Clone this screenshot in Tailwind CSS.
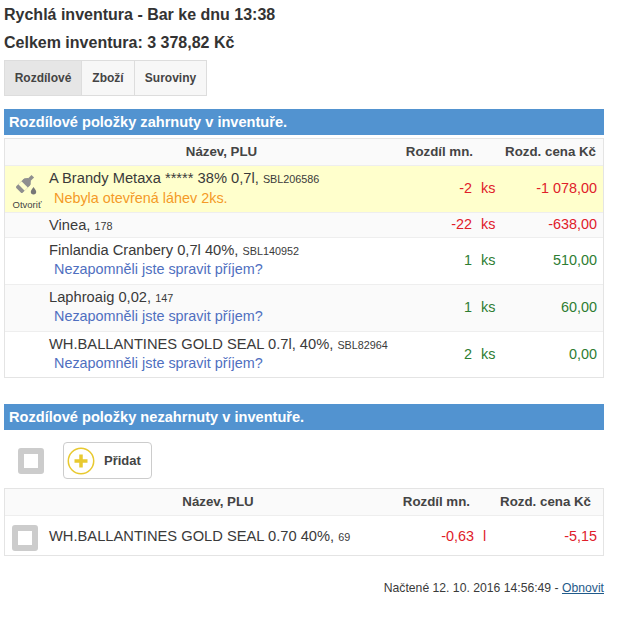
<!DOCTYPE html>
<html lang="cs">
<head>
  <meta charset="UTF-8" />
  <title>Rychlá inventura</title>
  <script src="https://cdn.jsdelivr.net/npm/@tailwindcss/browser@4"></script>
</head>
<body class="bg-white text-[#3a3a3a] font-['Liberation_Sans',Arial,sans-serif] text-[14.4px]">
  <div class="w-[600px] ml-[4px]">
    <!-- Nadpis -->
    <h3 class="text-[16px] font-bold leading-[20px] pt-[5px] text-[#333]">Rychlá inventura - Bar ke dnu 13:38</h3>
    <h3 class="text-[16px] font-bold leading-[20px] mt-[8px] text-[#333]">Celkem inventura: 3 378,82 Kč</h3>

    <!-- Záložky -->
    <div class="flex mt-[7px] text-[12px] font-bold text-[#444]">
      <div class="h-[36px] w-[78px] flex items-center justify-center bg-[#e6e6e6] border border-[#ddd]">Rozdílové</div>
      <div class="h-[36px] w-[53px] flex items-center justify-center bg-[#f7f7f7] border border-[#ddd] border-l-0">Zboží</div>
      <div class="h-[36px] w-[72px] flex items-center justify-center bg-[#f7f7f7] border border-[#ddd] border-l-0">Suroviny</div>
    </div>

    <!-- Zahrnuté položky -->
    <div class="mt-[13px] h-[26px] leading-[26px] bg-[#5293d0] text-white font-bold text-[14.6px] pl-[5px]">Rozdílové položky zahrnuty v inventuře.</div>
    <div class="mt-[3px] border border-[#e4e4e4]">
      <div class="flex h-[26px] items-center bg-[#fafafa] text-[13.3px] font-bold text-[#444]">
        <div class="w-[394px] pl-[39px] text-center">Název, PLU</div>
        <div class="w-[74px] text-right">Rozdíl mn.</div>
        <div class="w-[123px] text-right">Rozd. cena Kč</div>
      </div>

      <div class="flex h-[47px] bg-[#ffffcc] border-t border-[#eee]">
        <div class="w-[44px] flex flex-col items-center pt-[8px] shrink-0 text-[9.5px] leading-[10px] text-[#444]">
          <svg width="22" height="22" viewBox="0 0 22 22">
            <g transform="translate(9 10) rotate(45)" fill="#8f8f8f">
              <rect x="-4.500" y="-4" width="9" height="13" rx="1.500"/>
              <path d="M-4.500-2Q-4.500-4-1.800-6.500H1.800Q4.500-4 4.500-2z"/>
              <rect x="-1.800" y="-11" width="3.600" height="5"/>
              <rect x="-4.500" y="0.500" width="9" height="4.500" fill="#ffffcc"/>
            </g>
            <path d="M17.500 13c1.500 2.200 2.700 3.300 2.700 4.700a2.700 2.700 0 0 1-5.400 0c0-1.400 1.200-2.500 2.700-4.700z" fill="#777"/>
          </svg>
          <span class="mt-[4px]">Otvoriť</span>
        </div>
        <div class="w-[350px] pt-[3px] leading-[19px]">
          <div class="text-[14.7px]">A Brandy Metaxa ***** 38% 0,7l, <span class="text-[10.8px]">SBL206586</span></div>
          <div class="pl-[5px] text-[#f49a27]">Nebyla otevřená láhev 2ks.</div>
        </div>
        <div class="w-[73px] self-center text-right text-[#e0202a]">-2</div>
        <div class="w-[24px] self-center pl-[9px] text-[#e0202a]">ks</div>
        <div class="w-[107px] pr-[6px] self-center text-right text-[#e0202a]">-1 078,00</div>
      </div>

      <div class="flex h-[25px] items-center bg-[#fafafa] border-t border-[#eee]">
        <div class="w-[394px] pl-[44px] text-[14.7px]">Vinea, <span class="text-[10.8px]">178</span></div>
        <div class="w-[73px] text-right text-[#e0202a]">-22</div>
        <div class="w-[24px] pl-[9px] text-[#e0202a]">ks</div>
        <div class="w-[107px] pr-[6px] text-right text-[#e0202a]">-638,00</div>
      </div>

      <div class="flex h-[47px] items-center border-t border-[#eee]">
        <div class="w-[394px] pl-[44px] leading-[18px] mb-[3px]">
          <div class="text-[14.7px]">Finlandia Cranbery 0,7l 40%, <span class="text-[10.8px]">SBL140952</span></div>
          <div class="pl-[5px] text-[#4f6fc0]">Nezapomněli jste spravit příjem?</div>
        </div>
        <div class="w-[73px] text-right text-[#2e7d32]">1</div>
        <div class="w-[24px] pl-[9px] text-[#2e7d32]">ks</div>
        <div class="w-[107px] pr-[6px] text-right text-[#2e7d32]">510,00</div>
      </div>

      <div class="flex h-[47px] items-center bg-[#fafafa] border-t border-[#eee]">
        <div class="w-[394px] pl-[44px] leading-[18px] mb-[3px]">
          <div class="text-[14.7px]">Laphroaig 0,02, <span class="text-[10.8px]">147</span></div>
          <div class="pl-[5px] text-[#4f6fc0]">Nezapomněli jste spravit příjem?</div>
        </div>
        <div class="w-[73px] text-right text-[#2e7d32]">1</div>
        <div class="w-[24px] pl-[9px] text-[#2e7d32]">ks</div>
        <div class="w-[107px] pr-[6px] text-right text-[#2e7d32]">60,00</div>
      </div>

      <div class="flex h-[46px] items-center border-t border-[#eee]">
        <div class="w-[394px] pl-[44px] leading-[18px] mb-[3px]">
          <div class="text-[14.7px]">WH.BALLANTINES GOLD SEAL 0.7l, 40%, <span class="text-[10.8px]">SBL82964</span></div>
          <div class="pl-[5px] text-[#4f6fc0]">Nezapomněli jste spravit příjem?</div>
        </div>
        <div class="w-[73px] text-right text-[#2e7d32]">2</div>
        <div class="w-[24px] pl-[9px] text-[#2e7d32]">ks</div>
        <div class="w-[107px] pr-[6px] text-right text-[#2e7d32]">0,00</div>
      </div>
    </div>

    <!-- Nezahrnuté položky -->
    <div class="mt-[26px] h-[26px] leading-[26px] bg-[#5293d0] text-white font-bold text-[14.6px] pl-[5px]">Rozdílové položky nezahrnuty v inventuře.</div>
    <div class="flex items-center mt-[12px]">
      <div class="ml-[14px] w-[26px] h-[26px] rounded-[3px] border-[6px] border-[#ccc] bg-white"></div>
      <div class="ml-[19px] w-[89px] h-[37px] rounded-[4px] border border-[#ccc] flex items-center pl-[3px] text-[13px] font-bold text-[#444]">
        <svg width="28" height="28" viewBox="0 0 28 28">
          <circle cx="14" cy="14" r="12.700" fill="#fff" stroke="#e8c92f" stroke-width="1.500"/>
          <path d="M14 7.500v13M7.500 14h13" stroke="#e8c92f" stroke-width="3.500"/>
        </svg>
        <span class="ml-[9px]">Přidat</span>
      </div>
    </div>
    <div class="mt-[9px] border border-[#e4e4e4]">
      <div class="flex h-[26px] items-center bg-[#fafafa] text-[13.3px] font-bold text-[#444]">
        <div class="w-[391px] pl-[35px] text-center">Název, PLU</div>
        <div class="w-[74px] text-right">Rozdíl mn.</div>
        <div class="w-[121px] text-right">Rozd. cena Kč</div>
      </div>
      <div class="flex h-[40px] items-center pt-[2px] border-t border-[#eee]">
        <div class="w-[44px] shrink-0 pl-[7px] mt-[2px]">
          <div class="w-[26px] h-[26px] rounded-[3px] border-[6px] border-[#ccc] bg-white"></div>
        </div>
        <div class="w-[350px] text-[14.7px]">WH.BALLANTINES GOLD SEAL 0.70 40%, <span class="text-[10.8px]">69</span></div>
        <div class="w-[75px] text-right text-[#e0202a]">-0,63</div>
        <div class="w-[24px] pl-[9px] text-[#e0202a]">l</div>
        <div class="w-[105px] pr-[6px] text-right text-[#e0202a]">-5,15</div>
      </div>
    </div>

    <!-- Patička -->
    <p class="mt-[23px] text-right text-[12.2px] leading-[18px]">Načtené 12. 10. 2016 14:56:49 - <a href="#" class="underline text-[#1f5a8a]">Obnovit</a></p>
  </div>
</body>
</html>
